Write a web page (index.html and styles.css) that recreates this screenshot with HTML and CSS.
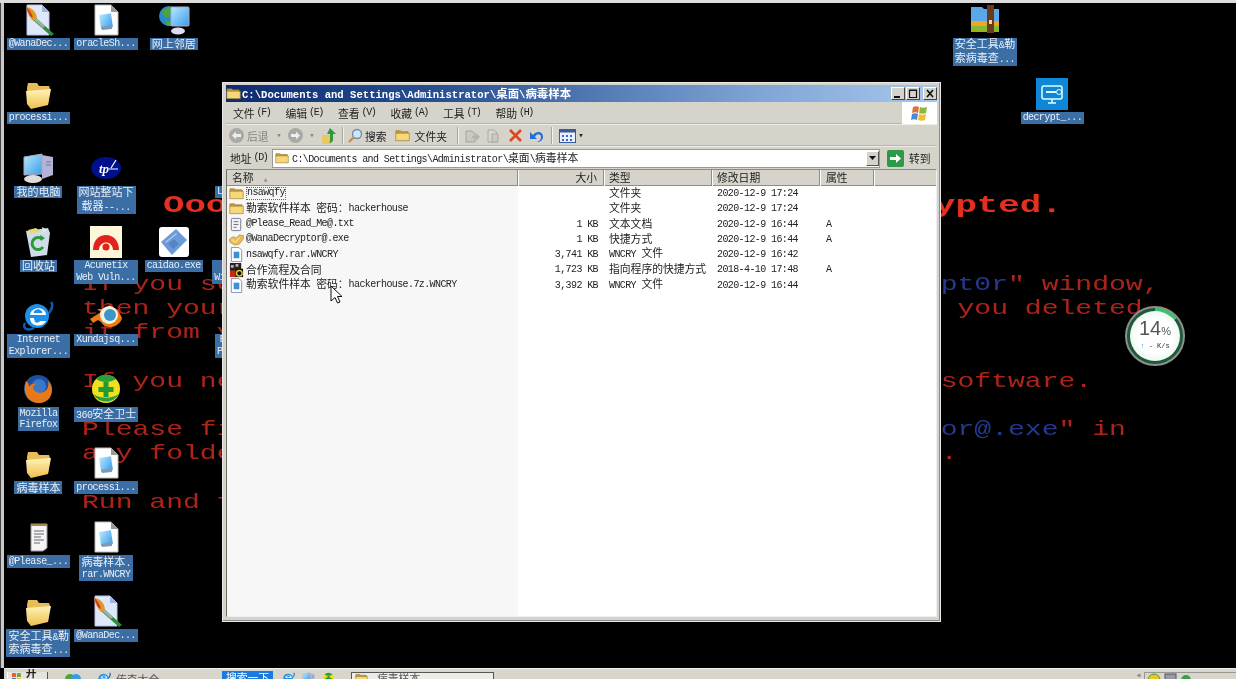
FILE: index.html
```html
<!DOCTYPE html>
<html lang="zh">
<head>
<meta charset="utf-8">
<title>病毒样本</title>
<link rel="stylesheet" href="styles.css">
</head>
<body>
<svg class="defs" width="0" height="0" aria-hidden="true">
  <defs>
    <linearGradient id="fg" x1="0" y1="0" x2="0" y2="1"><stop offset="0" stop-color="#fff3b8"/><stop offset="1" stop-color="#eebf4e"/></linearGradient>
    <linearGradient id="sc" x1="0" y1="0" x2="1" y2="1"><stop offset="0" stop-color="#b8e8ff"/><stop offset="1" stop-color="#3a9ce8"/></linearGradient>
    <symbol id="folder" viewBox="0 0 32 32"><path d="M5 10l1-5h9l2 3 10 0 1 3-2 15-16 4-4-4z" fill="#e8bd58"/><path d="M4 13l25-2-3 16-17 4-4-5z" fill="url(#fg)"/></symbol>
    <symbol id="doc" viewBox="0 0 32 32"><path d="M5 1h16l7 7v23H5z" fill="#fff" stroke="#bbb"/><path d="M21 1v7h7z" fill="#999"/><rect x="10" y="10" width="12" height="14" fill="url(#sc)" transform="rotate(-8 16 17)"/><path d="M11 23l11-2v4l-10 1z" fill="#7a9ab8"/></symbol>
    <symbol id="brush" viewBox="0 0 32 32"><path d="M5 1h15l7 7v23H5z" fill="#dfe8fb" stroke="#b8c4e4"/><path d="M20 1v7h7z" fill="#9db4e0"/><path d="M13 13l19 17-3 2-18-16z" fill="#2e8a3e"/><path d="M14 14l9 8-2 2-9-8z" fill="#9ab5a0"/><path d="M4 3c5 0 10 4 11 11l-4 3C8 14 5 9 4 3z" fill="#e09a24"/><path d="M4 3c3 2 6 6 7 11l-3-2z" fill="#c83a2c"/></symbol>
    <symbol id="notes" viewBox="0 0 32 32"><path d="M9 3h16v24l-4 3H9z" fill="#f4f4f4" stroke="#999"/><path d="M9 3h16v2H9z" fill="#a08a50"/><path d="M12 10h10M12 13h10M12 16h7M12 19h10M12 22h6" stroke="#667" stroke-width="1"/></symbol>
    <symbol id="net" viewBox="0 0 32 32"><circle cx="11" cy="12" r="10" fill="#2a8ac8"/><path d="M4 8c3-4 8-6 11-3 0 4-3 4-4 8-3 1-5 0-7-5zM7 16l6 2 0 4-4 0z" fill="#4ca53a"/><rect x="13" y="3" width="18" height="19" rx="1" fill="url(#sc)" stroke="#aac"/><ellipse cx="20" cy="27" rx="7" ry="3.5" fill="#dde"/></symbol>
    <symbol id="pc" viewBox="0 0 32 32"><path d="M20 3l11 2v18l-11 4z" fill="#b4b4d8"/><path d="M24 10h5M24 13h5" stroke="#778"/><path d="M2 5l18-3v20L2 23z" fill="url(#sc)" stroke="#aab"/><ellipse cx="11" cy="27" rx="9" ry="4" fill="#ddd"/></symbol>
    <symbol id="tp" viewBox="0 0 32 32"><ellipse cx="16" cy="16" rx="15" ry="11" fill="#00108c"/><text x="9" y="21" font-family="Liberation Serif" font-style="italic" font-weight="700" font-size="13" letter-spacing="0" fill="#fff">tp</text><path d="M19 17h9M21 16l5-8" stroke="#fff" stroke-width="1.2"/></symbol>
    <symbol id="bin" viewBox="0 0 32 32"><path d="M4 5l22-3 2 5-3 22-16 2z" fill="#cfdce8"/><path d="M6 4l8-2 4 3-9 3z" fill="#e8d870"/><path d="M20 1l5 3-4 3z" fill="#e8e8e8"/><path d="M20 13a6 6 0 1 0 1 8" fill="none" stroke="#2a9a3a" stroke-width="3"/><path d="M18 9l5 3-4 3z" fill="#2a9a3a"/></symbol>
    <symbol id="acu" viewBox="0 0 32 32"><rect width="32" height="32" fill="#fdf6d8"/><path d="M3 24C3 4 29 4 29 24h-6C23 14 9 14 9 24z" fill="#e0231c"/><circle cx="16" cy="21" r="3.5" fill="#e0231c"/></symbol>
    <symbol id="book" viewBox="0 0 32 32"><rect x="1" y="1" width="30" height="30" rx="3" fill="#fff"/><path d="M3 16L18 3l11 11-15 15z" fill="#6c9ad8"/><path d="M7 16l11-9 1 1-11 9z" fill="#a8c8f0"/><path d="M16 13l5 5-6 5-5-5z" fill="#5585c4"/></symbol>
    <symbol id="ie" viewBox="0 0 32 32"><path d="M29 2c3 3 0 9-3 12M3 23c-3 6 3 8 9 5" fill="none" stroke="#0d5cb8" stroke-width="2.4"/><circle cx="15" cy="16" r="12" fill="#1e90e8"/><path d="M8 15h16c0-9-15-9-16 0zM8 18c0 9 13 10 16 3h-6c-2 3-6 2-6-3z" fill="#fff"/><path d="M11.500 13c1-5 8-5 9 0z" fill="#1e90e8"/></symbol>
    <symbol id="blend" viewBox="0 0 32 32"><path d="M0 19l11-7-4-3h11l1-4 9 5 4 8c-2 9-16 13-21 4l-3-2-5 3z" fill="#ee7a14"/><circle cx="19" cy="15" r="9" fill="#f6f0e4"/><circle cx="20" cy="15" r="6" fill="#3a98c8"/></symbol>
    <symbol id="fox" viewBox="0 0 32 32"><circle cx="16" cy="16" r="14" fill="#1f4e9e"/><circle cx="17" cy="13" r="7" fill="#3a78c8"/><path d="M4 8c-4 12 2 22 13 22 8 0 13-6 13-13 0-4-2-7-4-9 1 4 0 8-3 10-4 3-9 2-11-1-2-3 0-6 3-6-3-1-7 0-8 3 0-2 0-4-3-6z" fill="#e8781c"/></symbol>
    <symbol id="s360" viewBox="0 0 32 32"><circle cx="16" cy="16" r="14" fill="#f0e020"/><path d="M6 6c6 4 14 4 20 0a14 14 0 0 0-20 0z" fill="#2ba03a"/><path d="M3 21c6 10 20 10 26 0-8 5-18 5-26 0z" fill="#2ba03a"/><path d="M13.500 9h5v5h5v5h-5v5h-5v-5h-5v-5h5z" fill="#1f9a34"/></symbol>
    <symbol id="rar" viewBox="0 0 32 32"><path d="M2 3h11l2 2h15v15H2z" fill="#5aa8e8"/><rect x="2" y="17" width="28" height="7" fill="#e8a828"/><rect x="2" y="22" width="28" height="6" fill="#8ab828"/><rect x="18" y="1" width="7" height="28" fill="#6a3a1c"/><rect x="20" y="16" width="3" height="4" fill="#f0d8a0"/></symbol>
    <symbol id="dec" viewBox="0 0 32 32"><rect width="32" height="32" fill="#0f86d8"/><rect x="6" y="8" width="20" height="13" rx="2" fill="none" stroke="#dff" stroke-width="1.500"/><path d="M10 14h10" stroke="#dff" stroke-width="2"/><circle cx="23" cy="14" r="2.500" fill="none" stroke="#dff"/><path d="M12 25h8M16 21v4" stroke="#dff" stroke-width="1.500"/></symbol>
    <symbol id="app" viewBox="0 0 16 16"><rect x="1" y="0" width="12" height="9" fill="#222"/><path d="M2 2h3v3H2zM7 1h3v3H7z" fill="#d8a0b0"/><rect x="1" y="8" width="7" height="7" fill="#c8281c"/><rect x="7" y="6" width="8" height="9" fill="#111"/><circle cx="11" cy="11" r="3" fill="none" stroke="#e8c820" stroke-width="1.500"/></symbol>
    <symbol id="hands" viewBox="0 0 16 16"><path d="M0 8l4-3 4 1 3-3 5 1-1 4-4 5-5 1-5-3z" fill="#e8bd58" stroke="#a8843a" stroke-width=".6"/><path d="M3 8l4 3 4-5" fill="none" stroke="#fff3c0"/></symbol>
    <symbol id="txt" viewBox="0 0 16 16"><rect x="2.500" y="1.500" width="10" height="13" rx="1" fill="#f2f2f6" stroke="#778"/><path d="M5 5h5M5 8h5M5 11h3" stroke="#667"/></symbol>
    <symbol id="file" viewBox="0 0 16 16"><path d="M2.500 .5h8l3 3v12h-11z" fill="#fff" stroke="#8892a8"/><rect x="5" y="5" width="6" height="7" fill="#3f8ed8"/></symbol>
    <symbol id="sfolder" viewBox="0 0 16 16"><path d="M1 3h5l1 1h7v2H1z" fill="#c8a040" stroke="#8a6a20" stroke-width=".6"/><path d="M.8 5.500h14.400v8H.8z" fill="#f6d878" stroke="#9a7a30" stroke-width=".7"/></symbol>
  </defs>
</svg>

<div class="topstrip"></div>
<div class="stage">
  <div class="leftstrip"></div>
  <main class="desktop">
    <div class="wallpaper">
      <p class="wall-head">Ooops, your important files are encrypted.</p>
      <p class="wall-line">If you see this text, but don't see the "<span class="wall-blue">Wana Decrypt0r</span>" window,</p>
      <p class="wall-line">then your antivirus removed the decrypt software or you deleted</p>
      <p class="wall-line">it from your computer.</p>
      <p class="wall-line">&nbsp;</p>
      <p class="wall-line">If you need your files you have to run the decrypt software.</p>
      <p class="wall-line">&nbsp;</p>
      <p class="wall-line">Please find an application file named "<span class="wall-blue">@WanaDecryptor@.exe</span>" in</p>
      <p class="wall-line">any folder or restore from the antivirus quarantine.</p>
      <p class="wall-line">&nbsp;</p>
      <p class="wall-line">Run and follow the instructions!</p>
    </div>

    <div class="icons">
      <div class="item c1 r1"><svg class="ico"><use href="#brush"/></svg><div class="lbl">@WanaDec...</div></div>
      <div class="item c2 r1"><svg class="ico"><use href="#doc"/></svg><div class="lbl">oracleSh...</div></div>
      <div class="item c3 r1"><svg class="ico"><use href="#net"/></svg><div class="lbl z">网上邻居</div></div>
      <div class="item c15 r1"><svg class="ico"><use href="#rar"/></svg><div class="lbl"><span class="z">安全工具</span>&amp;<span class="z">勒<br>索病毒查</span>...</div></div>
      <div class="item c1 r2"><svg class="ico"><use href="#folder"/></svg><div class="lbl">processi...</div></div>
      <div class="item c16 r2"><svg class="ico"><use href="#dec"/></svg><div class="lbl">decrypt_...</div></div>
      <div class="item c1 r3"><svg class="ico"><use href="#pc"/></svg><div class="lbl z">我的电脑</div></div>
      <div class="item c2 r3"><svg class="ico"><use href="#tp"/></svg><div class="lbl"><span class="z">网站整站下<br>载器</span>--...</div></div>
      <div class="item c4 r3"><svg class="ico"></svg><div class="lbl">LanHelper</div></div>
      <div class="item c1 r4"><svg class="ico"><use href="#bin"/></svg><div class="lbl z">回收站</div></div>
      <div class="item c2 r4"><svg class="ico"><use href="#acu"/></svg><div class="lbl">Acunetix<br>Web Vuln...</div></div>
      <div class="item c3 r4"><svg class="ico"><use href="#book"/></svg><div class="lbl">caidao.exe</div></div>
      <div class="item c4 r4"><svg class="ico"></svg><div class="lbl">Navicat<br>Windows...</div></div>
      <div class="item c1 r5"><svg class="ico"><use href="#ie"/></svg><div class="lbl">Internet<br>Explorer...</div></div>
      <div class="item c2 r5"><svg class="ico"><use href="#blend"/></svg><div class="lbl">Xundajsq...</div></div>
      <div class="item c4 r5"><svg class="ico"></svg><div class="lbl">EditPlus<br>Portable.</div></div>
      <div class="item c1 r6"><svg class="ico"><use href="#fox"/></svg><div class="lbl">Mozilla<br>Firefox</div></div>
      <div class="item c2 r6"><svg class="ico"><use href="#s360"/></svg><div class="lbl wide">360<span class="z">安全卫士</span></div></div>
      <div class="item c1 r7"><svg class="ico"><use href="#folder"/></svg><div class="lbl z">病毒样本</div></div>
      <div class="item c2 r7"><svg class="ico"><use href="#doc"/></svg><div class="lbl">processi...</div></div>
      <div class="item c1 r8"><svg class="ico"><use href="#notes"/></svg><div class="lbl">@Please_...</div></div>
      <div class="item c2 r8"><svg class="ico"><use href="#doc"/></svg><div class="lbl"><span class="z">病毒样本</span>.<br>rar.WNCRY</div></div>
      <div class="item c1 r9"><svg class="ico"><use href="#folder"/></svg><div class="lbl"><span class="z">安全工具</span>&amp;<span class="z">勒<br>索病毒查</span>...</div></div>
      <div class="item c2 r9"><svg class="ico"><use href="#brush"/></svg><div class="lbl">@WanaDec...</div></div>
    </div>

    <section class="window">
      <header class="titlebar">
        <svg class="t-ico"><use href="#sfolder"/></svg>
        <div class="t-text">C:\Documents and Settings\Administrator\<span class="tz">桌面</span>\<span class="tz">病毒样本</span></div>
        <div class="t-btns">
          <div class="t-btn"><svg width="14" height="13" viewBox="0 0 14 13"><path d="M3 10h6" stroke="#111" stroke-width="2"/></svg></div>
          <div class="t-btn"><svg width="14" height="13" viewBox="0 0 14 13"><path d="M3.500 3.500h7v7h-7z M3 3h8" fill="none" stroke="#111" stroke-width="1.200"/></svg></div>
          <div class="t-btn close"><svg width="14" height="13" viewBox="0 0 14 13"><path d="M4 3l6 7M10 3l-6 7" stroke="#111" stroke-width="1.600"/></svg></div>
        </div>
      </header>

      <nav class="menubar">
        <div class="menu"><span class="z">文件</span><span class="key">(F)</span></div>
        <div class="menu"><span class="z">编辑</span><span class="key">(E)</span></div>
        <div class="menu"><span class="z">查看</span><span class="key">(V)</span></div>
        <div class="menu"><span class="z">收藏</span><span class="key">(A)</span></div>
        <div class="menu"><span class="z">工具</span><span class="key">(T)</span></div>
        <div class="menu"><span class="z">帮助</span><span class="key">(H)</span></div>
        <div class="flag">
          <svg width="20" height="18" viewBox="0 0 20 18"><path d="M3 3c2-1 4-1 6 0l-1 6c-2-1-4-1-6 0z" fill="#e0703a"/><path d="M10 3c2 1 4 1 7 0l-1 6c-2 1-5 1-7 0z" fill="#8ab83a"/><path d="M2 10c2-1 4-1 6 0l-1 6c-2-1-4-1-6 0z" fill="#4a88d8"/><path d="M9 10c2 1 5 1 7 0l-1 6c-2 1-5 1-7 0z" fill="#f0c030"/></svg>
        </div>
      </nav>

      <div class="toolbar">
        <svg class="tb back" width="17" height="17" viewBox="0 0 17 17"><circle cx="8.500" cy="8.500" r="7.500" fill="#a9a9a5"/><path d="M4 8.500l4-4v2.500h5v3H8v2.500z" fill="#eee"/></svg>
        <span class="z tb-dim">后退</span>
        <span class="drop">▾</span>
        <svg class="tb fwd" width="17" height="17" viewBox="0 0 17 17"><circle cx="8.500" cy="8.500" r="7.500" fill="#a9a9a5"/><path d="M13 8.500l-4-4v2.500H4v3h5v2.500z" fill="#eee"/></svg>
        <span class="drop">▾</span>
        <svg class="tb up" width="16" height="18" viewBox="0 0 16 18"><path d="M1 8h9v9H1z" fill="#e8c860"/><path d="M9 1l6 6h-3v6c0 2-2 3-4 3 1-1 1-2 1-3V7H6z" fill="#2c9a3a"/></svg>
        <i class="sep"></i>
        <svg class="tb srch" width="16" height="16" viewBox="0 0 16 16"><circle cx="10" cy="6" r="4.500" fill="#cfe6fb" stroke="#6a8ab0" stroke-width="1.300"/><path d="M7 9l-5 5" stroke="#d88a30" stroke-width="2.400"/></svg>
        <span class="z tb-txt">搜索</span>
        <svg class="tb fold" width="15" height="15"><use href="#sfolder"/></svg>
        <span class="z tb-txt">文件夹</span>
        <i class="sep"></i>
        <svg class="tb dim1" width="16" height="16" viewBox="0 0 16 16"><path d="M2 3h6l3 3v8H2z" fill="#c9c9c3" stroke="#a3a39c"/><path d="M8 8h4V5l4 4-4 4v-3H8z" fill="#b3b3ac"/></svg>
        <svg class="tb dim2" width="16" height="16" viewBox="0 0 16 16"><path d="M3 2h6l3 3v9H3z" fill="#d6d6d0" stroke="#a9a9a2"/><path d="M7 6h6v8H7z" fill="#c9c9c3" stroke="#a9a9a2"/></svg>
        <svg class="tb del" width="15" height="15" viewBox="0 0 15 15"><path d="M2 2l11 11M13 2L2 13" stroke="#e2451c" stroke-width="2.600"/></svg>
        <svg class="tb undo" width="16" height="16" viewBox="0 0 16 16"><path d="M4 7c4-5 10-3 10 2 0 3-3 5-6 5 3-1 4-3 4-5 0-3-4-4-6 0l2 2H1V4z" fill="#1f6fd8"/></svg>
        <i class="sep"></i>
        <svg class="tb view" width="17" height="14" viewBox="0 0 17 14"><rect x=".5" y=".5" width="16" height="13" fill="#e8f0fb" stroke="#3a5a9c"/><rect x=".5" y=".5" width="16" height="3" fill="#3a5a9c"/><path d="M3 6h2v2H3zM7 6h2v2H7zM11 6h2v2h-2zM3 10h2v2H3zM7 10h2v2H7zM11 10h2v2h-2z" fill="#3a6ac0"/></svg>
        <span class="drop dark">▾</span>
      </div>

      <div class="addrbar">
        <div class="addr-label"><span class="z">地址</span><span class="key">(D)</span></div>
        <div class="combo">
          <svg class="combo-ico" width="14" height="14"><use href="#sfolder"/></svg>
          <div class="combo-text">C:\Documents and Settings\Administrator\<span class="z">桌面</span>\<span class="z">病毒样本</span></div>
          <div class="combo-btn"><svg width="7" height="4" viewBox="0 0 7 4"><path d="M0 0h7L3.500 4z" fill="#111"/></svg></div>
        </div>
        <div class="go">
          <svg width="17" height="17" viewBox="0 0 17 17"><rect width="17" height="17" rx="2" fill="#2c9a48"/><path d="M3 7h6V4l5 4.500L9 13v-3H3z" fill="#fff"/></svg>
          <span class="z">转到</span>
        </div>
      </div>

      <div class="listview">
        <div class="row head">
          <div class="hcell"><span class="z">名称</span><span class="sort">▲</span></div>
          <div class="hcell right z">大小</div>
          <div class="hcell z">类型</div>
          <div class="hcell z">修改日期</div>
          <div class="hcell z attr">属性</div>
          <div class="hcell last"></div>
        </div>
        <div class="rows">
          <div class="row">
            <div class="cell name"><svg class="f-ico"><use href="#sfolder"/></svg><span class="focus">nsawqfy</span></div>
            <div class="cell size"></div><div class="cell type z">文件夹</div><div class="cell date">2020-12-9 17:24</div><div class="cell attr"></div>
          </div>
          <div class="row">
            <div class="cell name"><svg class="f-ico"><use href="#sfolder"/></svg><span class="fname"><span class="z">勒索软件样本 密码：</span>hackerhouse</span></div>
            <div class="cell size"></div><div class="cell type z">文件夹</div><div class="cell date">2020-12-9 17:24</div><div class="cell attr"></div>
          </div>
          <div class="row">
            <div class="cell name"><svg class="f-ico"><use href="#txt"/></svg><span class="fname">@Please_Read_Me@.txt</span></div>
            <div class="cell size">1 KB</div><div class="cell type z">文本文档</div><div class="cell date">2020-12-9 16:44</div><div class="cell attr">A</div>
          </div>
          <div class="row">
            <div class="cell name"><svg class="f-ico"><use href="#hands"/></svg><span class="fname">@WanaDecryptor@.exe</span></div>
            <div class="cell size">1 KB</div><div class="cell type z">快捷方式</div><div class="cell date">2020-12-9 16:44</div><div class="cell attr">A</div>
          </div>
          <div class="row">
            <div class="cell name"><svg class="f-ico"><use href="#file"/></svg><span class="fname">nsawqfy.rar.WNCRY</span></div>
            <div class="cell size">3,741 KB</div><div class="cell type">WNCRY <span class="z">文件</span></div><div class="cell date">2020-12-9 16:42</div><div class="cell attr"></div>
          </div>
          <div class="row">
            <div class="cell name"><svg class="f-ico"><use href="#app"/></svg><span class="fname z">合作流程及合同</span></div>
            <div class="cell size">1,723 KB</div><div class="cell type z">指向程序的快捷方式</div><div class="cell date">2018-4-10 17:48</div><div class="cell attr">A</div>
          </div>
          <div class="row">
            <div class="cell name"><svg class="f-ico"><use href="#file"/></svg><span class="fname"><span class="z">勒索软件样本 密码：</span>hackerhouse.7z.WNCRY</span></div>
            <div class="cell size">3,392 KB</div><div class="cell type">WNCRY <span class="z">文件</span></div><div class="cell date">2020-12-9 16:44</div><div class="cell attr"></div>
          </div>
        </div>
      </div>

      <svg class="cursor" width="13" height="19" viewBox="0 0 13 19"><path d="M1 1v15l4-3.500 2.500 5.500 2.500-1-2.500-5.500H12z" fill="#fff" stroke="#111"/></svg>
    </section>

    <aside class="meter">
      <div class="meter-in">
        <div class="meter-num">14<span class="meter-pct">%</span></div>
        <div class="meter-rate"><span class="meter-up">↑</span> - K/s</div>
      </div>
    </aside>
  </main>
</div>

<footer class="taskbar">
  <div class="start"><svg width="12" height="12" viewBox="0 0 12 12"><path d="M1 1h4v4H1z" fill="#e0602a"/><path d="M6 1h4v4H6z" fill="#6aa83a"/><path d="M1 6h4v4H1z" fill="#3a78d0"/><path d="M6 6h4v4H6z" fill="#f0c030"/></svg><span class="z">开始</span></div>
  <div class="ql ql-a"><svg width="16" height="12" viewBox="0 0 16 12"><circle cx="5" cy="7" r="5" fill="#4ca53a"/><circle cx="11" cy="7" r="5" fill="#3a9ce8"/></svg></div>
  <div class="ql ql-b"><svg width="14" height="14"><use href="#ie"/></svg><span class="z task-txt">传奇大全</span></div>
  <div class="search-tab z">搜索一下</div>
  <div class="ql ql-c"><svg width="13" height="13"><use href="#ie"/></svg><svg width="13" height="13"><use href="#pc"/></svg><svg width="13" height="13"><use href="#s360"/></svg></div>
  <div class="taskbtn"><svg width="13" height="13"><use href="#sfolder"/></svg><span class="z task-txt">病毒样本</span></div>
  <div class="tray-arrow">◂</div>
  <div class="tray">
    <svg width="14" height="12" viewBox="0 0 14 12"><circle cx="7" cy="7" r="6" fill="#e8c820" stroke="#4a9a3a"/></svg>
    <svg width="13" height="12" viewBox="0 0 13 12"><rect x="1" y="1" width="11" height="10" fill="#99a" stroke="#556"/></svg>
    <svg width="12" height="12" viewBox="0 0 12 12"><circle cx="6" cy="7" r="5" fill="#3aa048"/></svg>
  </div>
</footer>
</body>
</html>
```

FILE: styles.css
```css
* { box-sizing: border-box; }

html, body {
  margin: 0;
  width: 1236px;
  height: 679px;
  overflow: hidden;
  background: #000;
}

body {
  display: flex;
  flex-direction: column;
  font: 10px/12px "Liberation Mono", "Noto Sans CJK SC", monospace;
  letter-spacing: -.6px;
  color: #222;
  filter: blur(.3px);
}

.defs { position: absolute; }

.z, .z * {
  font-family: "Noto Sans CJK SC", "Liberation Sans", sans-serif;
  font-size: 10.800px;
  letter-spacing: 0;
}

.topstrip {
  height: 3px;
  flex: none;
  background: #dcdcdc;
}

.stage {
  flex: 1;
  display: flex;
  min-height: 0;
}

.leftstrip {
  width: 4px;
  flex: none;
  background: linear-gradient(90deg, #444 0 1px, #c9c9c9 1px);
}

.desktop {
  position: relative;
  flex: 1;
  overflow: hidden;
  background: #000;
}

/* wallpaper: Courier stretched wide by the screen scaling */
.wallpaper {
  position: absolute;
  left: 78px;
  top: 186px;
  width: 1150px;
  font-family: "Liberation Mono", monospace;
  letter-spacing: 0;
  color: #b0231a;
}

.wallpaper p {
  margin: 0;
  white-space: pre;
  transform-origin: 0 50%;
}

.wallpaper .wall-head {
  margin-left: 81px;
  height: 33px;
  font-size: 24px;
  line-height: 33px;
  font-weight: 700;
  color: #e6301f;
  transform: scaleX(1.487);
}

.wall-line {
  height: 24.250px;
  font-size: 21px;
  line-height: 24.250px;
  transform: scaleX(1.336);
}

.wallpaper .wall-line:nth-child(2) { margin-top: 50.500px; }

.wall-blue { color: #24398f; }

/* icon grid */
.icons {
  position: absolute;
  inset: 0;
  padding: 1px 0 0 .7px;
  display: grid;
  grid-template-columns: repeat(16, 67.600px);
  grid-template-rows: repeat(9, 73.900px);
}

.item {
  display: flex;
  flex-direction: column;
  align-items: center;
}

.ico {
  width: 32px;
  height: 32px;
  flex: none;
}

.lbl {
  margin-top: 2px;
  padding: .4px 2px;
  max-width: 64px;
  background: #3a6ea5;
  color: #e9eff6;
  line-height: 11.600px;
  text-align: center;
  white-space: nowrap;
}

.lbl.wide { min-width: 63px; }

.lbl .z, .lbl.z {
  font-size: 11px;
  line-height: 11.600px;
}

.c1 { grid-column: 1; }
.c2 { grid-column: 2; }
.c3 { grid-column: 3; }
.c4 { grid-column: 4; }
.c15 { grid-column: 15; }
.c16 { grid-column: 16; }
.r1 { grid-row: 1; }
.r2 { grid-row: 2; }
.r3 { grid-row: 3; }
.r4 { grid-row: 4; }
.r5 { grid-row: 5; }
.r6 { grid-row: 6; }
.r7 { grid-row: 7; }
.r8 { grid-row: 8; }
.r9 { grid-row: 9; }

/* explorer window */
.window {
  position: absolute;
  left: 218px;
  top: 79px;
  width: 719px;
  height: 540px;
  display: flex;
  flex-direction: column;
  padding: 2px 3px 4px 3px;
  background: #d6d3cb;
  border: 1px solid #e8e8e8;
  box-shadow: inset -1px -1px 0 #8c8c8c;
}

.titlebar {
  flex: none;
  height: 17px;
  display: flex;
  align-items: center;
  background: linear-gradient(90deg, #0e2a70 0%, #274f92 30%, #7fa5d5 75%, #a8c8ec 100%);
}

.t-ico { width: 15px; height: 15px; flex: none; }

.t-text {
  margin-left: 1px;
  flex: 1;
  color: #fff;
  font-family: "Liberation Mono", monospace;
  font-size: 10.600px;
  font-weight: 700;
  letter-spacing: 0;
  white-space: nowrap;
}

.tz {
  font-family: "Noto Sans CJK SC", sans-serif;
  font-size: 11.400px;
  font-weight: 700;
}

.t-btns { display: flex; gap: 1px; }

.t-btn {
  display: flex;
  width: 14px;
  height: 13px;
  background: #d6d3cb;
  border: 1px solid;
  border-color: #fff #444 #444 #fff;
}

.t-btn svg { margin: -1px; flex: none; }
.t-btn.close { margin-left: 2px; }

.menubar {
  flex: none;
  height: 23px;
  display: flex;
  align-items: center;
  gap: 16px;
  padding-left: 7px;
  border-bottom: 1px solid #eeece6;
  box-shadow: inset 0 -1px 0 #b8b5ac;
}

.menu {
  display: flex;
  align-items: center;
  width: 36.500px;
  white-space: nowrap;
}

.key {
  margin-left: 2px;
  font-size: 10px;
  letter-spacing: -1.400px;
}

.flag {
  margin-left: auto;
  width: 35px;
  height: 22px;
  display: flex;
  align-items: center;
  justify-content: center;
  background: #fff;
}

.toolbar {
  flex: none;
  height: 22px;
  display: flex;
  align-items: center;
  padding-left: 2px;
  border-bottom: 1px solid #eeece6;
  box-shadow: inset 0 -1px 0 #b8b5ac;
}

.tb { flex: none; }
.tb-dim { margin-left: 2px; width: 24px; color: #88867f; white-space: nowrap; }
.tb-txt { white-space: nowrap; margin-left: 2px; }
.drop { width: 8px; margin: 0 2px 0 4px; color: #888; font-size: 9px; text-align: center; letter-spacing: 0; }
.drop.dark { margin: 0 0 0 1px; color: #222; }
.fwd { margin-left: 2px; }
.up { margin-left: 3px; }
.sep { width: 1px; height: 17px; flex: none; background: #a8a59c; box-shadow: 1px 0 0 #f4f2ec; }
.up + .sep { margin: 0 4px 0 5px; }
.fold { margin: 0 3px 0 8px; }
.tb-txt + .sep { margin: 0 6px 0 10px; }
.dim2 { margin-left: 5px; }
.del { margin-left: 7px; }
.undo { margin-left: 6px; }
.undo + .sep { margin: 0 7px 0 6px; }

.addrbar {
  flex: none;
  height: 22px;
  display: flex;
  align-items: center;
}

.addr-label {
  display: flex;
  align-items: center;
  width: 46px;
  padding-left: 4px;
  white-space: nowrap;
}

.combo {
  width: 608px;
  height: 19px;
  display: flex;
  align-items: center;
  padding-left: 2px;
  background: #fff;
  border: 1px solid #9a9a94;
}

.combo-ico { flex: none; }

.combo-text {
  flex: 1;
  margin-left: 3px;
  white-space: nowrap;
}

.combo-btn {
  width: 13px;
  height: 15px;
  display: flex;
  align-items: center;
  justify-content: center;
  background: #d6d3cb;
  border: 1px solid;
  border-color: #fff #555 #555 #fff;
}

.go {
  display: flex;
  align-items: center;
  gap: 5px;
  margin-left: 7px;
}

.listview {
  flex: 1;
  min-height: 0;
  display: flex;
  flex-direction: column;
  border: 1px solid;
  border-color: #8a8a84 #eee #eee #6f6f6a;
  background: linear-gradient(90deg, #f7f7f7 291px, #fff 291px);
}

.row {
  display: grid;
  grid-template-columns: 291px 86px 108px 108px 54px 1fr;
  align-items: center;
  height: 15.300px;
}

.head {
  flex: none;
  height: 16px;
  background: #d6d3cb;
  box-shadow: inset 0 -1px 0 #8f8c84;
}

.hcell {
  height: 16px;
  line-height: 15px;
  padding-left: 5px;
  border-right: 1px solid #8f8c84;
  box-shadow: 1px 0 0 #fff;
  white-space: nowrap;
}

.hcell.right { text-align: right; padding-right: 6px; }
.hcell.attr { padding-left: 6px; }
.hcell.last { border: 0; box-shadow: none; }

.sort {
  margin-left: 10px;
  color: #9a978e;
  font-size: 7px;
}

.cell {
  height: 15.300px;
  line-height: 15.300px;
  padding-left: 5px;
  white-space: nowrap;
}

.cell.z { line-height: 13px; }
.cell .z { line-height: 1; }
.fname .z { vertical-align: -1px; }

.cell.attr { padding-left: 6px; }

.cell.name {
  display: flex;
  align-items: center;
  padding-left: 2px;
  gap: 2px;
  word-spacing: 3px;
}

.fname { margin-bottom: 1px; }

.cell.size { text-align: right; padding: 0 6px 0 0; }

.f-ico { width: 15px; height: 15px; flex: none; }

.focus {
  height: 13px;
  line-height: 12px;
  padding: 0 1px;
  outline: 1px dotted #666;
  outline-offset: -1px;
}

.cursor {
  position: absolute;
  left: 107px;
  top: 202px;
}

/* CPU meter */
.meter {
  position: absolute;
  left: 1121px;
  top: 303px;
  width: 60px;
  height: 60px;
  padding: 3px;
  border-radius: 50%;
  border: 2px solid #8f8f8f;
  background: conic-gradient(#3cc06a 0 14%, #1e5a38 14% 100%);
}

.meter-in {
  width: 100%;
  height: 100%;
  border-radius: 50%;
  padding-top: 7px;
  text-align: center;
  background: radial-gradient(circle, #fff 50%, #dff3e7 85%, #a8dcc0 100%);
}

.meter-num {
  font: 20px/20px "Liberation Sans", sans-serif;
  letter-spacing: 0;
  color: #555;
}

.meter-pct { font-size: 11px; }

.meter-rate {
  margin-top: 1px;
  font-size: 7px;
  line-height: 8px;
  letter-spacing: 0;
  color: #333;
}

.meter-up { color: #1e90e8; }

/* taskbar */
.taskbar {
  flex: none;
  height: 11px;
  overflow: hidden;
  display: flex;
  align-items: flex-start;
  margin-left: 4px;
  padding: 3px 0 0 3px;
  background: #d8d5cd;
  border-top: 1px solid #f2f2f2;
}

.start {
  width: 41px;
  height: 12px;
  display: flex;
  align-items: center;
  gap: 3px;
  padding-left: 3px;
  font-weight: 700;
  background: #e6e4de;
  border-right: 1px solid #555;
  border-left: 1px solid #fff;
}

.ql { display: flex; align-items: center; gap: 5px; flex: none; }
.ql-a { margin-left: 17px; }
.ql-b { margin-left: 16px; width: 125px; }
.task-txt { color: #555; white-space: nowrap; }

.search-tab {
  width: 51px;
  height: 12px;
  margin-top: -1px;
  line-height: 12px;
  text-align: center;
  color: #fff;
  background: #1a7ae0;
}

.ql-c { margin-left: 9px; width: 68px; gap: 7px; }

.taskbtn {
  width: 143px;
  height: 12px;
  display: flex;
  align-items: center;
  gap: 9px;
  padding-left: 3px;
  margin-left: 1px;
  background: #eeece6;
  border: 1px solid #555;
}

.tray-arrow {
  margin-left: auto;
  margin-right: 3px;
  color: #888;
  line-height: 8px;
}

.tray {
  width: 92px;
  height: 12px;
  display: flex;
  gap: 3px;
  padding-left: 2px;
  border: 1px solid #9a978e;
  border-width: 1px 0 0 1px;
}
```
